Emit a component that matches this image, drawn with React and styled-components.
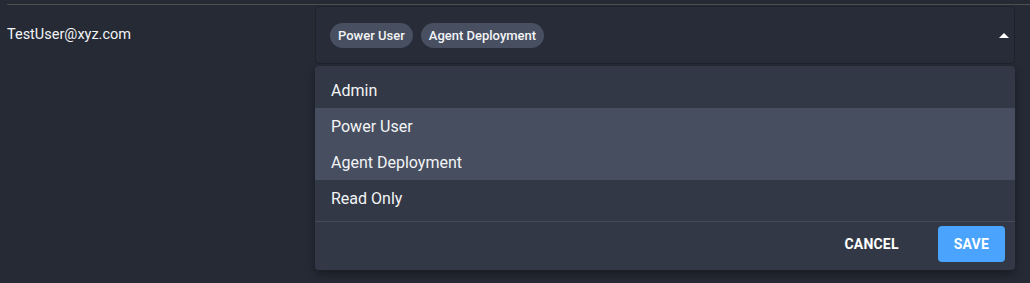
import React from 'react';
import styled, { createGlobalStyle } from 'styled-components';

const GlobalStyle = createGlobalStyle`
  html, body {
    margin: 0;
    background: #252a35;
    font-family: Roboto, 'Liberation Sans', sans-serif;
    color: #f1f2f4;
  }
`;

const Page = styled.div`
  padding: 4px 0 0 7px;
  height: 279px;
`;

const Row = styled.div`
  display: flex;
  border-top: 1px solid #4e4d4f;
`;

const Label = styled.div`
  width: 308px;
  padding-top: 21px;
  font-size: 14.5px;
  color: #f3f4f6;
`;

const SelectWrap = styled.div`
  position: relative;
  width: 700px;
  padding-top: 1px;
`;

const SelectBox = styled.div`
  display: flex;
  align-items: center;
  gap: 8px;
  height: 56px;
  padding: 0 14px;
  background: #272c38;
  border: 1px solid #1e222b;
  border-radius: 4px;
`;

const Chip = styled.span`
  display: inline-flex;
  align-items: center;
  height: 25px;
  padding: 0 8px;
  border-radius: 13px;
  background: #474f60;
  font-size: 13px;
  font-weight: 500;
  color: #f3f4f6;
`;

const Arrow = styled.span`
  margin-left: auto;
  margin-right: -9px;
  width: 0;
  height: 0;
  border-left: 5px solid transparent;
  border-right: 5px solid transparent;
  border-bottom: 5px solid #ffffff;
`;

const Menu = styled.div`
  position: absolute;
  top: 61px;
  left: 0;
  width: 700px;
  padding-top: 6px;
  background: #323845;
  border-radius: 4px;
  box-shadow: 0 4px 10px rgba(0, 0, 0, 0.35);
`;

const Item = styled.div`
  height: 36px;
  display: flex;
  align-items: center;
  padding-left: 16px;
  font-size: 16px;
  color: #f3f4f6;
  background: ${p => (p.selected ? '#464e5f' : 'transparent')};
`;

const Footer = styled.div`
  margin-top: 5px;
  border-top: 1px solid #454b58;
  display: flex;
  justify-content: flex-end;
  align-items: center;
  gap: 23px;
  padding: 4px 10px 8px 0;
`;

const Button = styled.button`
  height: 36px;
  padding: 0 16px;
  border: none;
  border-radius: 4px;
  font-family: inherit;
  font-size: 14px;
  font-weight: 700;
  letter-spacing: 0.2px;
  color: #ffffff;
  background: ${p => (p.primary ? '#4aa3fc' : 'transparent')};
`;

const roles = ['Admin', 'Power User', 'Agent Deployment', 'Read Only'];
const selected = ['Power User', 'Agent Deployment'];

export default function App() {
  return (
    <Page>
      <GlobalStyle />
      <Row>
        <Label>TestUser@xyz.com</Label>
        <SelectWrap>
          <SelectBox>
            {selected.map(r => (
              <Chip key={r}>{r}</Chip>
            ))}
            <Arrow />
          </SelectBox>
          <Menu>
            {roles.map(r => (
              <Item key={r} selected={selected.includes(r)}>
                {r}
              </Item>
            ))}
            <Footer>
              <Button>CANCEL</Button>
              <Button primary>SAVE</Button>
            </Footer>
          </Menu>
        </SelectWrap>
      </Row>
    </Page>
  );
}
